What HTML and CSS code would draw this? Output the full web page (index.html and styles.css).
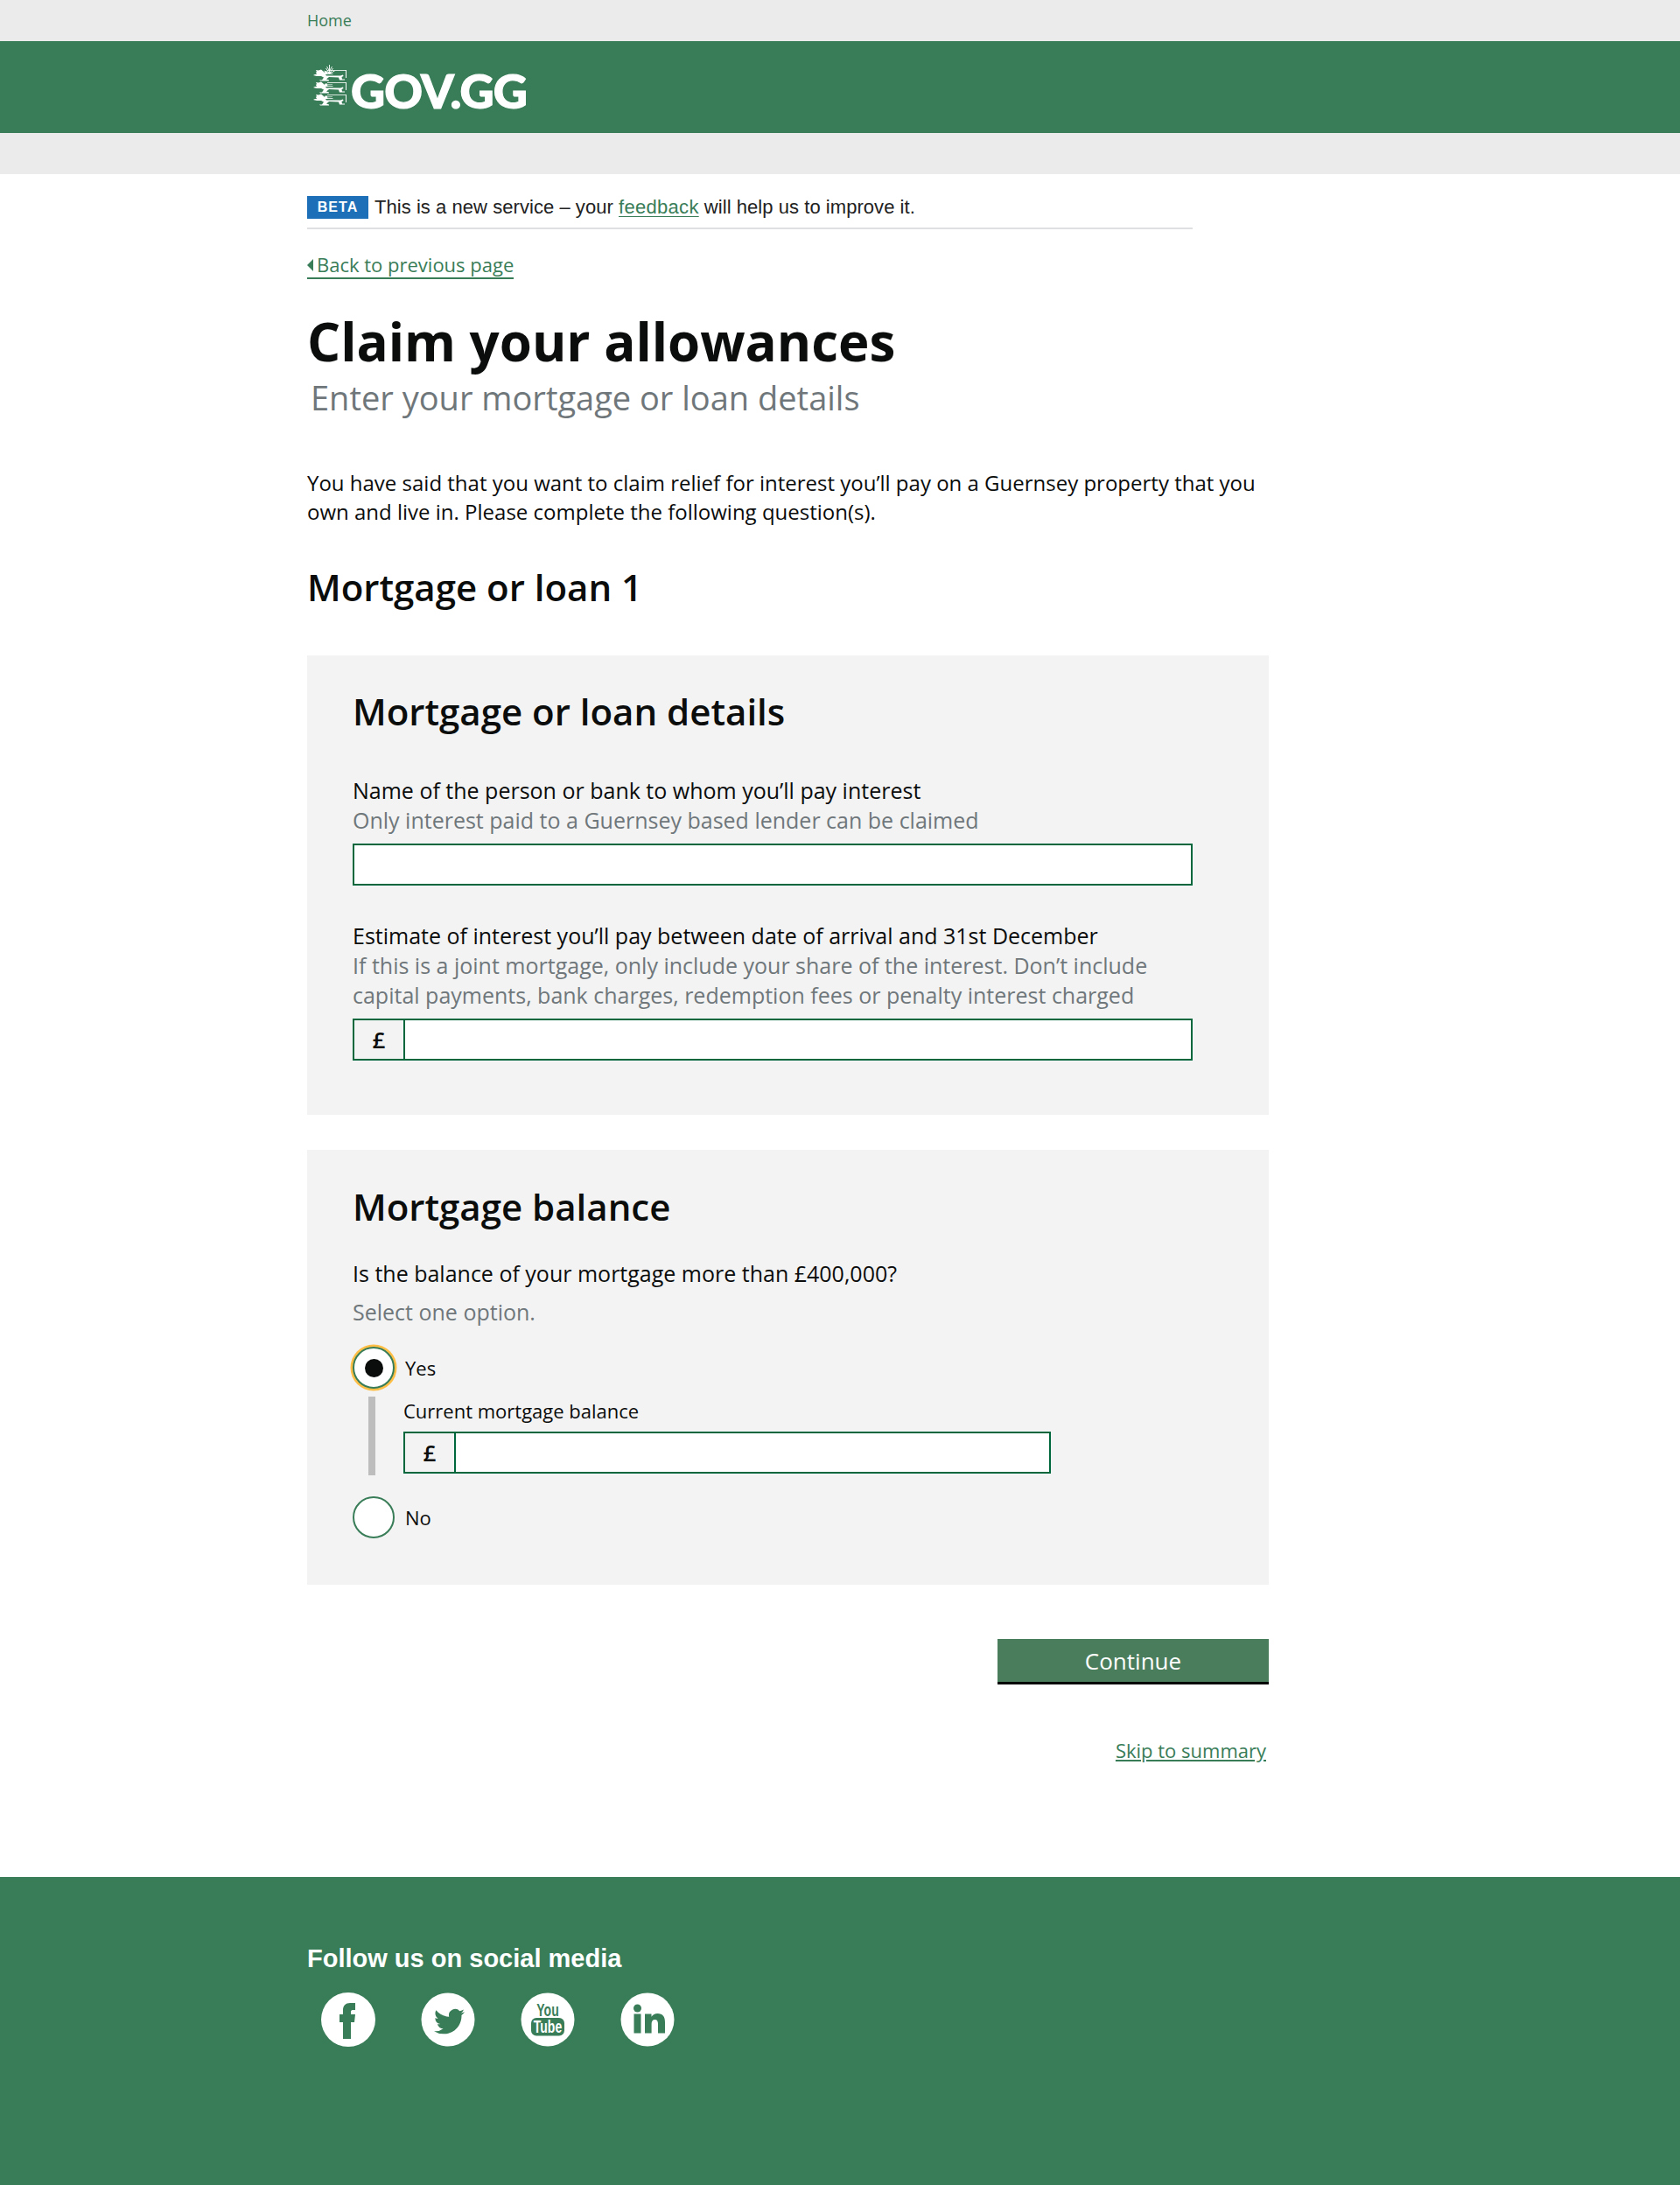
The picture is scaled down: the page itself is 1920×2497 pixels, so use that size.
FILE: index.html
```html
<!DOCTYPE html>
<html lang="en">
<head>
<meta charset="utf-8">
<title>Claim your allowances</title>
<link rel="stylesheet" href="styles.css">
</head>
<body>
<div class="topbar"><div class="wrap"><a class="home" href="#">Home</a></div></div>
<header class="masthead">
  <div class="wrap logo">
    <svg class="crest" width="38" height="50" viewBox="0 0 38 50" aria-hidden="true">
      <g fill="none" stroke="#fff" stroke-width=".9"><path d="M18.500 0v10M18.500 10l-4-6M18.500 10l4-6M18.500 10l-6-3M18.500 10l6-3M15.500 2l3 5 3-5"/></g>
      <g fill="#fff">
        <g id="lion">
          <path d="M0 12l2-1 2 0-1-2 1-1-1-2 3 .6 3-1 3 2.400 1 1 .5-1.500h2.500v1h6v.6l-6 .2 .5 1h6v.6H14l1 1.500h16l3-1 .5 1.500-2 1 .5 2.500h3v1h-6l-1-3-11-.5-3 2.500 3 1v1H8l-1-1h3l2-3-3-1.500-5 0z"/>
          <rect x="16" y="6" width="21" height=".8"/>
          <path d="M37 6h1v9h-1z"/>
        </g>
        <use href="#lion" y="14"/>
        <use href="#lion" y="28"/>
      </g>
    </svg>
    <span class="wordmark">GOV.GG</span>
  </div>
</header>
<div class="subbar"></div>
<main class="wrap">
  <div class="beta"><span class="tag">BETA</span><span class="beta-text">This is a new service – your <a href="#">feedback</a> will help us to improve it.</span></div>
  <a class="back" href="#"><span class="arrow"></span>Back to previous page</a>
  <h1>Claim your allowances</h1>
  <p class="sub">Enter your mortgage or loan details</p>
  <p class="intro">You have said that you want to claim relief for interest you’ll pay on a Guernsey property that you own and live in. Please complete the following question(s).</p>
  <h2 class="loan">Mortgage or loan 1</h2>

  <section class="panel first">
    <h3>Mortgage or loan details</h3>
    <div class="field name">
      <label>Name of the person or bank to whom you’ll pay interest</label>
      <div class="hint">Only interest paid to a Guernsey based lender can be claimed</div>
      <input class="text" type="text">
    </div>
    <div class="field">
      <label>Estimate of interest you’ll pay between date of arrival and 31st December</label>
      <div class="hint">If this is a joint mortgage, only include your share of the interest. Don’t include capital payments, bank charges, redemption fees or penalty interest charged</div>
      <div class="money"><span>£</span><input type="text"></div>
    </div>
  </section>

  <section class="panel second">
    <h3>Mortgage balance</h3>
    <div class="question">Is the balance of your mortgage more than £400,000?</div>
    <div class="hint select">Select one option.</div>
    <div class="radio"><span class="dot checked"></span><span>Yes</span></div>
    <div class="reveal">
      <label>Current mortgage balance</label>
      <div class="money short"><span>£</span><input type="text"></div>
    </div>
    <div class="radio no"><span class="dot"></span><span>No</span></div>
  </section>

  <div class="actions">
    <button class="continue" type="button">Continue</button>
    <a class="skip" href="#">Skip to summary</a>
  </div>
</main>
<footer class="footer">
  <div class="wrap">
    <div class="follow">Follow us on social media</div>
    <div class="social">
      <svg width="62" height="62" viewBox="0 0 62 62" aria-hidden="true"><circle cx="31" cy="31" r="31" fill="#fff"/><path fill="#397d58" d="M25 53V34h-4v-9h4v-5c0-5 3-8 8-8h6v8h-3c-1.500 0-2 1-2 2.500V25h5l-1 9h-4v19z"/></svg>
      <svg width="62" height="62" viewBox="0 0 62 62" aria-hidden="true"><circle cx="31" cy="31" r="30.500" fill="#fff"/><g transform="translate(15 15.600) scale(1.460)"><path fill="#397d58" d="M23.953 4.570a10 10 0 0 1-2.825.775 4.958 4.958 0 0 0 2.163-2.723c-.951.555-2.005.959-3.127 1.184a4.920 4.920 0 0 0-8.384 4.482C7.690 8.095 4.067 6.130 1.640 3.162a4.822 4.822 0 0 0-.666 2.475c0 1.710.870 3.213 2.188 4.096a4.904 4.904 0 0 1-2.228-.616v.060a4.923 4.923 0 0 0 3.946 4.827 4.996 4.996 0 0 1-2.212.085 4.936 4.936 0 0 0 4.604 3.417 9.867 9.867 0 0 1-6.102 2.105c-.390 0-.779-.023-1.170-.067a13.995 13.995 0 0 0 7.557 2.209c9.053 0 13.998-7.496 13.998-13.985 0-.210 0-.420-.015-.630A9.935 9.935 0 0 0 24 4.590z"/></g></svg>
      <svg width="62" height="62" viewBox="0 0 62 62" aria-hidden="true"><circle cx="31" cy="31" r="30.500" fill="#fff"/><text class="yt" transform="translate(31 26.500) scale(.7 1)" text-anchor="middle" fill="#397d58">You</text><rect x="12" y="29" width="38" height="20.500" rx="6" fill="#397d58"/><text class="yt" transform="translate(31 46) scale(.7 1)" text-anchor="middle" fill="#fff">Tube</text></svg>
      <svg width="62" height="62" viewBox="0 0 62 62" aria-hidden="true"><circle cx="31" cy="31" r="30.500" fill="#fff"/><g fill="#397d58"><circle cx="19.500" cy="18" r="4.500"/><rect x="15.500" y="24.500" width="8" height="22"/><path d="M28 24.500h7.500v3.200c1.500-2.400 4-3.800 7-3.800 6 0 8.500 3.700 8.500 10v12.600h-8V36c0-3-.8-5-3.500-5-2.800 0-3.900 2-3.900 5v10.500H28z"/></g></svg>
    </div>
  </div>
</footer>
</body>
</html>
```
FILE: styles.css
```css
* { box-sizing: border-box; }
html, body { margin: 0; padding: 0; }
body { font-family: "Open Sans", sans-serif; color: #0b0c0c; background: #fff; min-height: 2497px; display: flex; flex-direction: column; }
a { color: #397d58; }
.wrap { width: 1218px; margin: 0 auto; }

.topbar { background: #ebebeb; height: 47px; }
.home { display: block; font-size: 18px; line-height: 47px; text-decoration: none; }
.masthead { background: #397d58; height: 105px; }
.logo { display: flex; align-items: flex-start; height: 100%; padding: 27px 0 0 7px; gap: 5px; }
.crest { flex: none; }
.wordmark { font-family: Lato, sans-serif; font-weight: 900; font-size: 54px; letter-spacing: -.8px; color: #fff; line-height: 50px; -webkit-text-stroke: 1.2px #fff; margin-top: 5px; }
.subbar { background: #ebebeb; height: 47px; }

.beta { width: 1012px; height: 63px; padding-top: 25px; border-bottom: 2px solid #dee0e2; display: flex; align-items: flex-start; gap: 7px; font-family: "Liberation Sans", Arial, sans-serif; font-size: 22px; line-height: 26px; color: #222; }
.beta-text { letter-spacing: .05px; }
.beta-text a { letter-spacing: .3px; text-underline-offset: 3px; text-decoration-thickness: 1px; }
.tag { width: 70px; height: 26px; background: #1d70b8; color: #fff; font-weight: 700; font-size: 16px; letter-spacing: 1px; text-align: center; }
.back { display: inline-flex; align-items: center; gap: 4px; margin-top: 26px; height: 31px; font-size: 22px; line-height: 27px; text-decoration: none; border-bottom: 2px solid #397d58; }
.arrow { width: 0; height: 0; border-style: solid; border-width: 7px 7px 7px 0; border-color: transparent #397d58 transparent transparent; }
h1 { margin: 35px 0 0; font-size: 60px; line-height: 72px; font-weight: 700; }
.sub { margin: 3px 0 0 4px; font-size: 38px; line-height: 50px; color: #6f777b; }
.intro { width: 1099px; margin: 56px 0 0; font-size: 24px; line-height: 33px; }
h2.loan { margin: 42px 0 0; font-size: 42px; line-height: 56px; font-weight: 600; }

.panel { width: 1099px; background: #f3f3f3; padding: 0 52px; }
.panel.first { margin-top: 50px; height: 525px; padding-top: 36px; }
.panel.second { margin-top: 40px; height: 497px; padding-top: 37px; }
h3 { margin: 0; font-size: 42px; line-height: 56px; font-weight: 600; }
.field { width: 960px; margin-top: 40px; }
.field label, .question { display: block; font-size: 25px; line-height: 34px; }
.field.name { margin-top: 45px; }
.hint { font-size: 25px; line-height: 34px; color: #6f777b; }
.text { display: block; width: 960px; height: 48px; margin-top: 10px; background: #fff; border: 2px solid #00663c; border-radius: 0; outline: none; padding: 0 8px; }
.money { display: flex; width: 960px; height: 48px; margin-top: 10px; border: 2px solid #00663c; }
.money span { flex: none; width: 58px; border-right: 2px solid #00663c; font-size: 26px; font-weight: 600; line-height: 44px; text-align: center; }
.money input { flex: 1; min-width: 0; border: 0; outline: none; background: #fff; padding: 0 8px; }
.money.short { width: 740px; }
.question { margin-top: 31px; }
.hint.select { margin-top: 10px; }
.radio { display: flex; align-items: center; gap: 12px; margin: 23px 0 0 0; height: 48px; font-size: 22px; }
.dot { flex: none; width: 48px; height: 48px; border-radius: 50%; border: 2px solid #397d58; background: #fff; display: flex; align-items: center; justify-content: center; }
.dot.checked { box-shadow: 0 0 0 2.500px #ffbf47; }
.dot.checked::after { content: ""; width: 21px; height: 21px; border-radius: 50%; background: #0b0c0c; }
.reveal { margin: 9px 0 0 18px; padding: 0 0 0 32px; border-left: 8px solid #bdbdbd; height: 90px; }
.reveal label { display: block; font-size: 22px; line-height: 32px; }
.reveal .money { margin-top: 8px; }
.radio.no { margin-top: 24px; }

.actions { width: 1099px; display: flex; flex-direction: column; align-items: flex-end; }
.continue { margin-top: 62px; width: 310px; height: 52px; background: #4a7d5c; color: #fff; border: 0; border-bottom: 3px solid #000; font-family: "Open Sans", sans-serif; font-size: 26px; padding: 0; }
.skip { margin: 60px 3px 0 0; font-size: 22px; line-height: 30px; }

.footer { flex: 1; margin-top: 130px; background: #397d58; padding-top: 73px; }
.follow { font-family: "Liberation Sans", Arial, sans-serif; font-weight: 700; font-size: 29px; line-height: 40px; color: #fff; }
.social { display: flex; gap: 52px; margin: 19px 0 0 16px; }
.yt { font-family: "Liberation Sans Narrow", "Liberation Sans", sans-serif; font-weight: 700; font-size: 20px; }
```
